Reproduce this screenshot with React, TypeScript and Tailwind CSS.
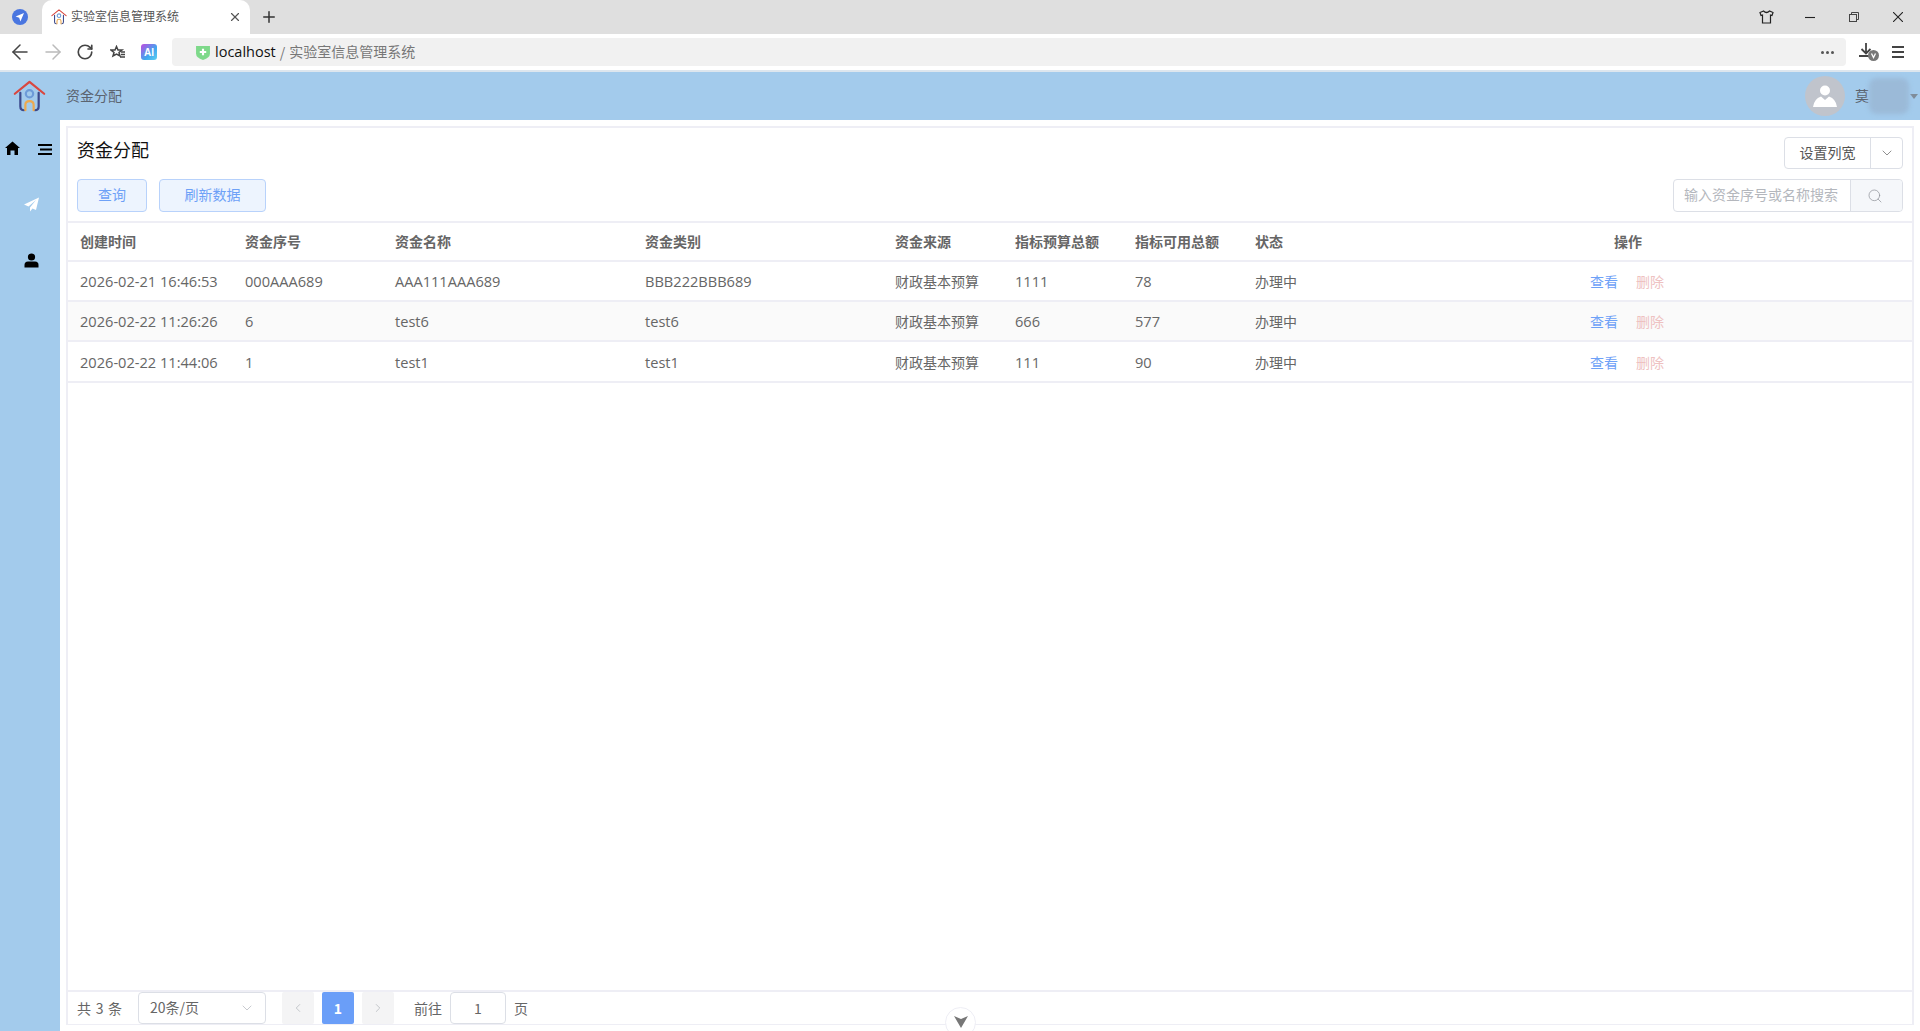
import React from "react";
import { ChevronDown, ChevronLeft, ChevronRight, Search, ArrowLeft, ArrowRight, RotateCw, Plus, X } from "lucide-react";

const grid = "grid grid-cols-[177px_150px_250px_250px_120px_120px_120px_335px_1fr] items-center";
const latin = "font-['Open_Sans','Noto_Sans_CJK_SC',sans-serif]";
const rows = [
  ["2026-02-21 16:46:53", "000AAA689", "AAA111AAA689", "BBB222BBB689", "财政基本预算", "1111", "78", "办理中"],
  ["2026-02-22 11:26:26", "6", "test6", "test6", "财政基本预算", "666", "577", "办理中"],
  ["2026-02-22 11:44:06", "1", "test1", "test1", "财政基本预算", "111", "90", "办理中"],
];
const heads = ["创建时间", "资金序号", "资金名称", "资金类别", "资金来源", "指标预算总额", "指标可用总额", "状态"];

function HouseLogo({ size }: { size: number }) {
  return (
    <svg width={size} height={size} viewBox="0 0 36 36" fill="none" strokeLinecap="round" strokeLinejoin="round">
      <path d="M2 15 L18 2 L34 15" stroke="#d9473f" strokeWidth="2.4" />
      <path d="M8 14 V29 Q8 33 12 33" stroke="#3c4a8c" strokeWidth="2.4" />
      <path d="M28 14 V29 Q28 33 24 33" stroke="#3c4a8c" strokeWidth="2.4" />
      <circle cx="18" cy="15" r="4" stroke="#6d9bd8" strokeWidth="2.4" />
      <path d="M13.500 33 V27 Q13.500 23 18 23 Q22.500 23 22.500 27 V33" stroke="#eda94f" strokeWidth="2.4" />
    </svg>
  );
}

function TabBar() {
  return (
    <div className="flex h-[34px] bg-[#dfdfdf]">
      <div className="w-[42px] flex items-center justify-center">
        <svg width="16" height="16" viewBox="0 0 16 16" className="mr-[3px]">
          <circle cx="8" cy="8" r="8" fill="#4a76e0" />
          <path d="M12 4 L3.600 7.600 L7.200 8.800 L8.400 12.400 Z" fill="#fff" />
        </svg>
      </div>
      <div className="w-[208px] h-[34px] bg-white rounded-t-[10px] flex items-center pl-[9px] pr-[8px]">
        <HouseLogo size={16} />
        <span className="ml-[4px] -mt-[2px] text-[12px] text-[#555] flex-1 leading-none">实验室信息管理系统</span>
        <X size={14} className="text-[#555]" strokeWidth={2} />
      </div>
      <div className="ml-[10px] flex items-center">
        <Plus size={18} className="text-[#333]" strokeWidth={2} />
      </div>
      <div className="flex-1" />
      <div className="flex items-center pr-[17px]">
        <svg width="15" height="14" viewBox="0 0 15 14" fill="none" stroke="#222" strokeWidth="1.2" className="mr-[31px]">
          <path d="M4.500 1 L1 2.500 L2 5.500 L3.500 5 V13 H11.500 V5 L13 5.500 L14 2.500 L10.500 1 Q7.500 4 4.500 1 Z" />
        </svg>
        <svg width="10" height="10" viewBox="0 0 10 10" stroke="#222" strokeWidth="1.100" className="mr-[34px]">
          <path d="M0 5.500 H10" />
        </svg>
        <svg width="10" height="10" viewBox="0 0 10 10" fill="none" stroke="#444" strokeWidth="1" className="mr-[34px]">
          <rect x="0.500" y="2.500" width="7" height="7" />
          <path d="M2.500 2.500 V0.500 H9.500 V7.500 H7.500" />
        </svg>
        <svg width="10" height="10" viewBox="0 0 10 10" stroke="#222" strokeWidth="1.100">
          <path d="M0 0 L10 10 M10 0 L0 10" />
        </svg>
      </div>
    </div>
  );
}

function AddressBar() {
  return (
    <div className="flex h-[38px] bg-white items-center border-b-2 border-[#dde6ee]">
      <ArrowLeft size={24} className="ml-[8px] text-[#444]" strokeWidth={1.5} />
      <ArrowRight size={24} className="ml-[9px] text-[#bbb]" strokeWidth={1.5} />
      <RotateCw size={18} className="ml-[11px] text-[#444]" strokeWidth={2.2} />
      <svg width="16" height="15" viewBox="0 0 16 15" className="ml-[16px]" fill="none" stroke="#444" strokeWidth="1.500">
        <path d="M6.500 1.500 L8 5 H12 L9 7.500 L10 11 L6.500 9 L3 11 L4 7.500 L1 5 H5 Z" />
        <path d="M11 7 H15 M11 9.500 H15 M10 12 H15" />
      </svg>
      <div className="ml-[15px] w-[16px] h-[16px] rounded-[3px] bg-[linear-gradient(135deg,#c04ae0,#3fa8ef_60%,#5fd0f0)] flex items-center justify-center text-white text-[10px] font-bold font-['Liberation_Sans',sans-serif]">AI</div>
      <div className="ml-[15px] w-[1674px] h-[28px] bg-[#f1f1f1] rounded-[4px] flex items-center pl-[24px] pr-[12px]">
        <svg width="14" height="15" viewBox="0 0 13 14">
          <path d="M0 1 H13 V8 Q13 12 6.500 14 Q0 12 0 8 Z" fill="#7ed98a" />
          <path d="M6.500 3.500 V9.500 M3.500 6.500 H9.500" stroke="#fff" strokeWidth="2" />
        </svg>
        <span className={`ml-[5px] text-[14.500px] text-[#111] ${latin}`}>localhost</span>
        <span className="ml-[4px] text-[14px] text-[#777]">/</span>
        <span className="ml-[4px] pb-[2px] text-[14px] text-[#777]">实验室信息管理系统</span>
        <div className="flex-1" />
        <div className="flex gap-[2px]">
          <i className="block w-[3px] h-[3px] rounded-full bg-[#555]" />
          <i className="block w-[3px] h-[3px] rounded-full bg-[#555]" />
          <i className="block w-[3px] h-[3px] rounded-full bg-[#555]" />
        </div>
      </div>
      <svg width="22" height="20" viewBox="0 0 22 20" className="ml-[12px]">
        <path d="M8 1 V11 M3.500 7 L8 11.500 L12.500 7 M1 14 H12" fill="none" stroke="#444" strokeWidth="1.800" />
        <circle cx="15.500" cy="13.500" r="5.500" fill="#777" />
        <path d="M13.500 11.500 L15.500 15.500 L17.500 11.500" fill="none" stroke="#fff" strokeWidth="1.300" />
      </svg>
      <svg width="12" height="12" viewBox="0 0 12 12" className="ml-[12px]" stroke="#444" strokeWidth="1.800">
        <path d="M0 1 H12 M0 6 H12 M0 11 H12" />
      </svg>
    </div>
  );
}

function Header() {
  return (
    <div className="h-[48px] bg-[#a3cbec] flex items-center">
      <div className="ml-[13px]"><HouseLogo size={33} /></div>
      <span className="ml-[20px] pb-[2px] text-[14px] text-[#5b6470]">资金分配</span>
      <div className="flex-1" />
      <div className="w-[40px] h-[40px] rounded-full bg-[#c0c4cc] flex items-center justify-center">
        <svg width="24" height="24" viewBox="0 0 24 24" fill="#fff">
          <circle cx="12" cy="6.500" r="5" />
          <path d="M0 23 Q1 15 8 12.500 L12 16 L16 12.500 Q23 15 24 23 Z" />
        </svg>
      </div>
      <span className="ml-[10px] pb-[2px] text-[14px] text-[#5b6470]">莫</span>
      <div className="w-[40px] h-[36px] bg-[#9bbad8] rounded-[8px] blur-[2px]" />
      <div className="ml-[1px] mr-[2px] w-0 h-0 border-x-[4.500px] border-x-transparent border-t-[5px] border-t-[#7f8c99]" />
    </div>
  );
}

function Sidebar() {
  return (
    <div className="w-[60px] shrink-0 bg-[#a3cbec] flex flex-col">
      <div className="flex items-center pl-[5px] pt-[21px] gap-[18px]">
        <svg width="15" height="15" viewBox="0 0 15 15" fill="#000">
          <path d="M7.500 0.500 L15 7 L13 7 V14 H9.500 V9.500 H5.500 V14 H2 V7 H0 Z" />
        </svg>
        <svg width="14" height="11" viewBox="0 0 14 11" stroke="#000" strokeWidth="2" className="mt-[2px]">
          <path d="M0 1 H14 M2 5.500 H14 M0 10 H14" />
        </svg>
      </div>
      <div className="flex justify-center mt-[41px] pl-[2px]">
        <svg width="15" height="15" viewBox="0 0 15 15" fill="#fff">
          <path d="M15 0.500 L0 7.500 L4.500 9.500 L12 3 L6 10.500 L6 14.500 L8.500 11.500 L12 13 Z" />
        </svg>
      </div>
      <div className="flex justify-center mt-[41px] pl-[2px]">
        <svg width="15" height="15" viewBox="0 0 15 15" fill="#000">
          <circle cx="7.500" cy="4" r="3.600" />
          <path d="M0.500 14.500 V12 Q0.500 8.500 4 8.500 H11 Q14.500 8.500 14.500 12 V14.500 Z" />
        </svg>
      </div>
    </div>
  );
}

function Toolbar() {
  return (
    <div className="flex justify-between pl-[9px] pr-[9px]">
      <div>
        <div className="text-[18px] text-[#111] h-[24px] leading-[24px] mt-[9px]">资金分配</div>
        <div className="flex gap-[12px] mt-[18px] text-[14px] text-[#6ea1f7]">
          <button className="w-[70px] h-[33px] pb-[2px] rounded-[4px] border border-[#b8d2fb] bg-[#edf4fe]">查询</button>
          <button className="w-[107px] h-[33px] pb-[2px] rounded-[4px] border border-[#b8d2fb] bg-[#edf4fe]">刷新数据</button>
        </div>
      </div>
      <div className="flex flex-col items-end">
        <div className="mt-[9px] w-[119px] h-[32px] border border-[#dcdfe6] rounded-[4px] flex items-center text-[14px] text-[#555]">
          <div className="flex-1 text-center pb-[2px]">设置列宽</div>
          <div className="w-[32px] h-full border-l border-[#dcdfe6] flex items-center justify-center">
            <ChevronDown size={16} className="text-[#666]" strokeWidth={1.1} />
          </div>
        </div>
        <div className="mt-[10px] w-[230px] h-[33px] border border-[#dcdfe6] rounded-[4px] flex items-center text-[14px] text-[#b4b7bd]">
          <div className="flex-1 pl-[10px] pb-[2px]">输入资金序号或名称搜索</div>
          <div className="w-[52px] h-full bg-[#f5f7fa] border-l border-[#dcdfe6] rounded-r-[4px] flex items-center justify-center pr-[3px]">
            <Search size={16} className="text-[#909399]" strokeWidth={1.1} />
          </div>
        </div>
      </div>
    </div>
  );
}

function cellPad(ri: number, i: number) {
  const cjk = i === 4 || i === 7;
  if (cjk) return ri === 2 ? "pt-[1px]" : "";
  return ri === 2 ? "pt-[3px]" : "pt-[2px]";
}

function Table() {
  return (
    <div className="flex-1 mt-[9px] border-t-2 border-[#eeeef5]">
      <div className={`${grid} h-[39px] border-b-2 border-[#eeeef5] text-[14px] font-bold text-[#666]`}>
        {heads.map((h, i) => <div key={i} className={i === 0 ? "pl-[12px]" : ""}>{h}</div>)}
        <div className="pl-[24px]">操作</div>
      </div>
      {rows.map((r, ri) => (
        <div key={ri} className={`${grid} ${ri === 2 ? "h-[41px]" : "h-[40px]"} border-b-2 border-[#eeeef5] text-[14.600px] text-[#666] ${ri === 1 ? "bg-[#fafafa]" : ""}`}>
          {r.map((c, i) => (
            <div key={i} className={`${i === 0 ? "pl-[12px]" : ""} ${i === 4 || i === 7 ? "text-[14px]" : ""} ${cellPad(ri, i)} ${latin}`}>{c}</div>
          ))}
          <div className="flex gap-[18px] text-[14px] mt-[1px]">
            <span className="text-[#6ea1f7]">查看</span>
            <span className="text-[#eec1c1]">删除</span>
          </div>
        </div>
      ))}
    </div>
  );
}

function Pager() {
  return (
    <div className="h-[34px] border-t-2 border-[#eeeef5] flex items-center pl-[9px] text-[14px] text-[#666] shrink-0">
      <span className="w-[61px] [word-spacing:1.500px]">共 3 条</span>
      <div className="w-[128px] h-[32px] border border-[#dcdfe6] rounded-[4px] flex items-center justify-between pl-[11px] pr-[10px]">
        <span className="pb-[2px]">20条/页</span>
        <ChevronDown size={16} className="text-[#b4b7bd]" strokeWidth={1.1} />
      </div>
      <div className="ml-[16px] w-[32px] h-[32px] bg-[#f4f4f5] rounded-[2px] flex items-center justify-center">
        <ChevronLeft size={14} className="text-[#b4b7bd]" strokeWidth={1.3} />
      </div>
      <div className="ml-[8px] w-[32px] h-[32px] bg-[#6a9ef8] rounded-[2px] flex items-center justify-center text-white font-bold">1</div>
      <div className="ml-[8px] w-[32px] h-[32px] bg-[#f4f4f5] rounded-[2px] flex items-center justify-center">
        <ChevronRight size={14} className="text-[#b4b7bd]" strokeWidth={1.3} />
      </div>
      <span className="ml-[20px]">前往</span>
      <div className="ml-[8px] w-[56px] h-[32px] border border-[#dcdfe6] rounded-[4px] flex items-center justify-center">1</div>
      <span className="ml-[8px]">页</span>
    </div>
  );
}

export default function App() {
  return (
    <div className="h-[1031px] w-[1920px] overflow-hidden flex flex-col bg-white font-['Noto_Sans_CJK_SC','Noto_Sans',sans-serif] relative">
      <TabBar />
      <AddressBar />
      <Header />
      <div className="flex flex-1 min-h-0">
        <Sidebar />
        <div className="flex-1 flex flex-col px-[6px] pt-[6px] pb-[6px] min-w-0">
          <div className="flex-1 flex flex-col border-2 border-[#eeeef5] border-b-0 min-h-0">
            <Toolbar />
            <Table />
            <Pager />
          </div>
          <div className="border-b border-[#eeeef5]" />
        </div>
      </div>
      <div className="absolute left-[945px] top-[1007px] w-[31px] h-[31px] rounded-full bg-white border border-[#eeeef5] flex justify-center pt-[8px]">
        <svg width="14" height="12" viewBox="0 0 14 12">
          <path d="M0 0 L7 3 L14 0 L7 12 Z" fill="#777" />
        </svg>
      </div>
    </div>
  );
}
